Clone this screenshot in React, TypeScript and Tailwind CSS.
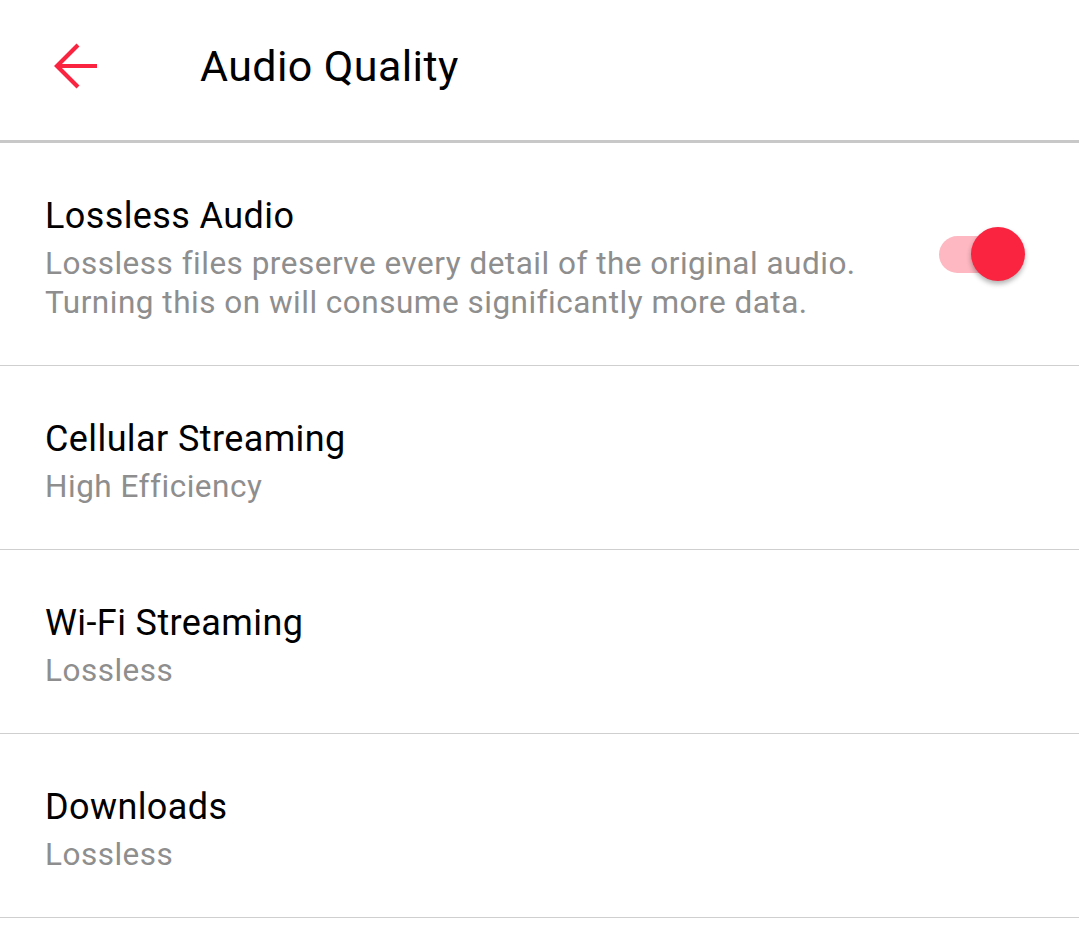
import { useState } from "react"

type Row = {
  title: string
  sub: string[]
  toggle?: boolean
}

const rows: Row[] = [
  {
    title: "Lossless Audio",
    sub: [
      "Lossless files preserve every detail of the original audio.",
      "Turning this on will consume significantly more data."
    ],
    toggle: true
  },
  { title: "Cellular Streaming", sub: ["High Efficiency"] },
  { title: "Wi-Fi Streaming", sub: ["Lossless"] },
  { title: "Downloads", sub: ["Lossless"] }
]

function Toggle({ on, onClick }: { on: boolean; onClick: () => void }) {
  return (
    <button onClick={onClick} className="relative w-[90px] h-[54px] shrink-0">
      <span
        className={`absolute left-[3px] top-[9px] w-[62px] h-[37px] rounded-full ${
          on ? "bg-[#fdb8c2]" : "bg-[#c9c9c9]"
        }`}
      />
      <span
        className={`absolute top-0 w-[54px] h-[54px] rounded-full shadow-[0_3px_5px_rgba(0,0,0,0.3)] ${
          on ? "left-[35px] bg-[#fa2340]" : "left-0 bg-[#f5f5f5]"
        }`}
      />
    </button>
  )
}

export default function App() {
  const [lossless, setLossless] = useState(true)

  return (
    <div className="w-[1079px] h-[935px] bg-white font-['Roboto',sans-serif] overflow-hidden">
      {/* HEADER */}
      <div className="h-[143px] pb-[8px] flex items-center border-b-[3px] border-[#c8c8c8]">
        <button className="ml-[46px] w-[56px] h-[56px] flex items-center justify-center text-[#fa2340]">
          <svg width="48" height="48" viewBox="0 0 48 48" fill="none">
            <path
              d="M47 24H7M28 3L7 24l21 21"
              stroke="currentColor"
              strokeWidth="4.2"
              strokeLinecap="butt"
            />
          </svg>
        </button>
        <h1 className="ml-[98px] text-[43px] tracking-[0.4px] leading-none text-black">Audio Quality</h1>
      </div>

      {/* LIST */}
      <div>
        {rows.map((row, i) => (
          <div
            key={i}
            className="flex items-center border-b border-[#cfcfcf] pl-[45px] pr-[53px] pt-[53px] pb-[43px]"
          >
            <div className="flex-1">
              <div className="text-[36px] tracking-[0.4px] leading-[40px] text-black">{row.title}</div>
              <div className="mt-[8px] text-[31.5px] tracking-[0.5px] leading-[39px] text-[#8e8e8e]">
                {row.sub.map((s, j) => (
                  <div key={j}>{s}</div>
                ))}
              </div>
            </div>
            {row.toggle && (
              <div className="-mt-[4px]">
                <Toggle on={lossless} onClick={() => setLossless(!lossless)} />
              </div>
            )}
          </div>
        ))}
      </div>
    </div>
  )
}
